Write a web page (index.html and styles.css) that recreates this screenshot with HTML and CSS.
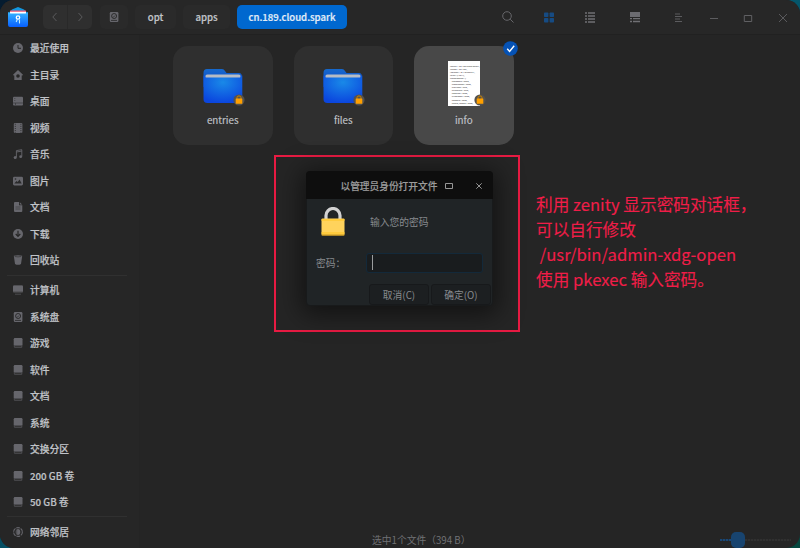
FILE: index.html
```html
<!DOCTYPE html>
<html>
<head>
<meta charset="utf-8">
<title>cn.189.cloud.spark</title>
<link rel="stylesheet" href="styles.css">
</head>
<body>
<svg class="defs" width="0" height="0">
  <defs>
    <linearGradient id="g-app" x1="0" y1="0" x2="0" y2="1"><stop offset="0" stop-color="#38b6ff"/><stop offset="1" stop-color="#075fff"/></linearGradient>
    <radialGradient id="g-folder" cx=".5" cy=".25" r=".75"><stop offset="0" stop-color="#1989e8"/><stop offset="1" stop-color="#0b46de"/></radialGradient>
    <linearGradient id="g-back" x1="0" y1="0" x2="0" y2="1"><stop offset="0" stop-color="#1669cc"/><stop offset="1" stop-color="#0b43cf"/></linearGradient>
  </defs>
  <symbol id="clock" viewBox="0 0 10 10"><circle cx="5" cy="5" r="5" fill="currentColor"/><path d="M5 2v3.3h3" fill="none" stroke="#262626"/></symbol>
  <symbol id="home" viewBox="0 0 10 10"><path fill-rule="evenodd" fill="currentColor" d="M5 0 10 4.7 9.4 5.5H8.7V10H1.3V5.5H.6L0 4.7ZM5 4.2A1.8 1.8 0 1 0 5 7.8 1.8 1.8 0 0 0 5 4.2Z"/></symbol>
  <symbol id="desktop" viewBox="0 0 10 10"><rect y=".8" width="10" height="8.6" rx="1" fill="currentColor"/><path d="M0 7h10M1.3 2.5h1M1.3 4.5h1M2.5 7v2" stroke="#303032" stroke-width=".6"/></symbol>
  <symbol id="film" viewBox="0 0 10 10"><rect x=".8" width="8.6" height="10" rx="1" fill="currentColor"/><path d="M2.3 .8v9M7.9 .8v9" stroke="#262626" stroke-width=".8" stroke-dasharray="1 1.1"/></symbol>
  <symbol id="music" viewBox="0 0 10 10"><path d="M3.4 8.3V1.6L8.8.7v6.8M3.4 3l5.4-.9" fill="none" stroke="currentColor" stroke-width=".9"/><circle cx="2.2" cy="8.5" r="1.5" fill="currentColor"/><circle cx="7.7" cy="7.7" r="1.4" fill="currentColor"/></symbol>
  <symbol id="image" viewBox="0 0 10 10"><rect y=".8" width="10" height="8.6" rx="1.4" fill="currentColor"/><path d="M1.3 7.4 3.5 5l1.2 1L6.5 3.5l2.2 3.9Z" fill="#2a2a2b"/><circle cx="2.5" cy="3" r=".8" fill="#2a2a2b"/></symbol>
  <symbol id="doc" viewBox="0 0 10 10"><path d="M1 1Q1 0 2 0h4v3.2h3.3V9q0 1-1 1H2Q1 10 1 9ZM6.8.2 9.2 2.5H6.8Z" fill="currentColor"/><path d="M2.5 5h5M2.5 7h5" stroke="#404042" stroke-width=".8"/></symbol>
  <symbol id="down" viewBox="0 0 10 10"><circle cx="5" cy="5" r="5" fill="currentColor"/><path d="M5 1.8v5M2.7 5 5 7.4 7.3 5" fill="none" stroke="#262626" stroke-width="1.2"/></symbol>
  <symbol id="trash" viewBox="0 0 10 10"><path d="M.8.8Q5-.5 9.2.8L8 9q-3 1.7-6 0Z" fill="currentColor"/><path d="M1.7 1.5q3.3.8 6.6 0" fill="none" stroke="#303032" stroke-width=".7"/></symbol>
  <symbol id="computer" viewBox="0 0 10 10"><rect y=".6" width="10" height="7.2" rx="1" fill="#48484b"/><path d="M0 1.6q0-1 1-1h8q1 0 1 1V6.5H0Z" fill="currentColor"/><path d="M2 9.2h6" stroke="#505053" stroke-width=".9"/></symbol>
  <symbol id="sysdisk" viewBox="0 0 10 10"><rect x=".8" width="8.6" height="10" rx="1.2" fill="currentColor"/><circle cx="5.1" cy="4" r="2.5" fill="none" stroke="#262626" stroke-width=".9"/><path d="m4 5.5 2-2M2 8.4h6" stroke="#262626" stroke-width=".8"/></symbol>
  <symbol id="disk" viewBox="0 0 10 10"><rect x=".8" width="8.6" height="10" rx="1.2" fill="#454548"/><path d="M.8 1.2Q.8 0 2 0h6.2Q9.4 0 9.4 1.2V7.3H.8Z" fill="currentColor"/><path d="M2 8.5h6" stroke="#2c2c2d" stroke-width=".7"/></symbol>
  <symbol id="network" viewBox="0 0 10 10"><circle cx="5" cy="5" r="4.4" fill="none" stroke="currentColor" stroke-width="1.1" stroke-dasharray="3.8 .8"/><ellipse cx="5" cy="5" rx="2.3" ry="3" fill="currentColor"/><path d="M3.7 2.5v5" stroke="#333" stroke-width=".5"/></symbol>
  <symbol id="folder" viewBox="0 0 40 35"><path d="M.5 4Q.5 0 4 0h15q2 0 3 2l1.5 2H36q3 0 3 4v10H.5Z" fill="url(#g-back)"/><path d="M2.5 6.8q.5-1.3 2-1.3h31q1.5 0 2 1.3V12h-35Z" fill="#b6bbc4"/><path d="M.5 6.5q1.5 0 2 2h34.8q.5-2 2-2V30q0 4-4 4H4.5q-4 0-4-4Z" fill="url(#g-folder)"/></symbol>
  <symbol id="lock" viewBox="0 0 12 12"><circle cx="6" cy="6" r="5.6" fill="#55524e"/><path d="M4 5.5V3.8a2 1.9 0 0 1 4 0V5.5" fill="none" stroke="#c98200" stroke-width="1"/><rect x="2.7" y="4.6" width="6.6" height="5.2" rx=".5" fill="#ffa000"/></symbol>
</svg>
<div class="window">
  <header class="toolbar">
    <svg class="logo" viewBox="0 0 20 20"><path d="M.5 6 4 2.5 10 0l6 2.5L19.5 6Z" fill="#1397df"/><path d="M2 3.5h16V7H2Z" fill="#ed5570"/><path d="M2 4.7h16V8H2Z" fill="#fff"/><path d="M0 5 2.5 6.5h15L20 5V18q0 2-2 2H2q-2 0-2-2Z" fill="url(#g-app)"/><circle cx="10" cy="10.5" r="1.7" fill="none" stroke="#fff" stroke-width="1.3"/><path d="M9.2 12.5 8.2 15M11.5 12.5v4" stroke="#bfeaff" stroke-width="1.1"/></svg>
    <div class="nav"><span><svg viewBox="0 0 10 10"><path d="M6.5 1 2.8 5l3.7 4"/></svg></span><span><svg viewBox="0 0 10 10"><path d="M3.5 1 7.2 5 3.5 9"/></svg></span></div>
    <div class="crumb crumb-disk"><svg class="ico"><use href="#sysdisk"/></svg></div>
    <div class="crumb crumb-opt">opt</div>
    <div class="crumb crumb-apps">apps</div>
    <div class="crumb crumb-active">cn.189.cloud.spark</div>
    <div class="tools">
      <svg viewBox="0 0 12 12"><g fill="none" stroke="#66666a" stroke-width="1"><circle cx="5" cy="5" r="4.3"/><path d="m8.2 8.2 3.3 3.3"/></g></svg>
      <svg viewBox="0 0 12 12"><g fill="#164b83"><rect x="1" y="1.5" width="4.4" height="4.4" rx=".7"/><rect x="6.6" y="1.5" width="4.4" height="4.4" rx=".7"/><rect x="1" y="7.1" width="4.4" height="4.4" rx=".7"/><rect x="6.6" y="7.1" width="4.4" height="4.4" rx=".7"/></g></svg>
      <svg viewBox="0 0 12 12"><path d="M1 2h2M4 2h7M1 5h2M4 5h7M1 8h2M4 8h7M1 11h2M4 11h7" stroke="#707074" stroke-width="1.3"/></svg>
      <svg viewBox="0 0 12 12"><path d="M1 1h10v5H1Z" fill="#6c6c71"/><path d="M1 7.7h2M4 7.7h7M1 10.5h2M4 10.5h7" stroke="#707074" stroke-width="1.3"/></svg>
    </div>
    <div class="winctl">
      <svg viewBox="0 0 12 12"><path d="M2 3h5M2 5.5h7M2 8h5M2 10.5h7" stroke="#5c5c5f"/></svg>
      <svg viewBox="0 0 12 12"><path d="M2 7.5h8" stroke="#5c5c5f"/></svg>
      <svg viewBox="0 0 12 12"><path d="M2.3 4.5h7.4v6H2.3Z" fill="none" stroke="#606063"/></svg>
      <svg viewBox="0 0 12 12"><path d="m2 3 8 8M10 3l-8 8" stroke="#606063" stroke-width=".9"/></svg>
    </div>
  </header>
  <div class="body">
    <nav class="sidebar">
      <div class="item"><svg class="ico"><use href="#clock"/></svg>最近使用</div>
      <div class="item"><svg class="ico"><use href="#home"/></svg>主目录</div>
      <div class="item"><svg class="ico"><use href="#desktop"/></svg>桌面</div>
      <div class="item"><svg class="ico"><use href="#film"/></svg>视频</div>
      <div class="item"><svg class="ico"><use href="#music"/></svg>音乐</div>
      <div class="item"><svg class="ico"><use href="#image"/></svg>图片</div>
      <div class="item"><svg class="ico"><use href="#doc"/></svg>文档</div>
      <div class="item"><svg class="ico"><use href="#down"/></svg>下载</div>
      <div class="item"><svg class="ico"><use href="#trash"/></svg>回收站</div>
      <div class="sep"></div>
      <div class="item"><svg class="ico"><use href="#computer"/></svg>计算机</div>
      <div class="item"><svg class="ico"><use href="#sysdisk"/></svg>系统盘</div>
      <div class="item"><svg class="ico"><use href="#disk"/></svg>游戏</div>
      <div class="item"><svg class="ico"><use href="#disk"/></svg>软件</div>
      <div class="item"><svg class="ico"><use href="#disk"/></svg>文档</div>
      <div class="item"><svg class="ico"><use href="#disk"/></svg>系统</div>
      <div class="item"><svg class="ico"><use href="#disk"/></svg>交换分区</div>
      <div class="item"><svg class="ico"><use href="#disk"/></svg>200 GB 卷</div>
      <div class="item"><svg class="ico"><use href="#disk"/></svg>50 GB 卷</div>
      <div class="sep"></div>
      <div class="item"><svg class="ico"><use href="#network"/></svg>网络邻居</div>
    </nav>
    <main class="main">
      <div class="files">
        <div class="card"><div class="pic"><svg class="folder"><use href="#folder"/></svg><svg class="lock"><use href="#lock"/></svg></div><div class="name">entries</div></div>
        <div class="card"><div class="pic"><svg class="folder"><use href="#folder"/></svg><svg class="lock"><use href="#lock"/></svg></div><div class="name">files</div></div>
        <div class="card selected">
          <div class="pic">
            <div class="paper"><pre>"appid": "cn.189.cloud.spark",
"name": "cn.189",
"version": "3.1.0.spark4",
"arch": ["x64"],
"permissions": {
   "autostart": false,
   "notification": false,
   "trayicon": true,
   "clipboard": true,
   "account": false,
   "bluetooth": false,
   "camera": false,
   "audio_record": false,</pre></div>
            <svg class="lock"><use href="#lock"/></svg>
          </div>
          <div class="name">info</div>
          <svg class="check" viewBox="0 0 15 15"><circle cx="7.5" cy="7.5" r="7.3" fill="#0552b5"/><path d="m4.2 7.8 2.4 2.6 4.6-5.7" fill="none" stroke="#fff" stroke-width="1.4"/></svg>
        </div>
      </div>
      <footer class="status"><span class="count">选中1个文件（394 B）</span><div class="slider"><i class="done"></i><i class="knob"></i><i class="rest"></i></div></footer>
    </main>
  </div>
</div>
<div class="frame"></div>
<section class="dialog">
  <div class="dlg-head"><span class="dlg-title">以管理员身份打开文件</span><svg class="dlg-max" viewBox="0 0 8 6"><path d="M.5.5h7v5h-7Z"/></svg><svg class="dlg-close" viewBox="0 0 6 6"><path d="m.3.3 5.4 5.4M5.7.3.3 5.7"/></svg></div>
  <div class="dlg-msg"><svg class="padlock" viewBox="0 0 24 29"><path d="M5 13V8.5a7 7 0 0 1 14 0V13" fill="none" stroke="#d2d2d2" stroke-width="3.2"/><rect x=".5" y="11.5" width="23" height="17" rx="1" fill="#ffd35c"/><path d="M.5 13h23M.5 26h23" stroke="#ffc933" stroke-width="1.5"/><path d="M.7 28h22.6" stroke="#c58e0b"/></svg><span>输入您的密码</span></div>
  <div class="dlg-field"><label>密码：</label><div class="input"><i></i></div></div>
  <div class="dlg-actions"><div class="btn">取消(C)</div><div class="btn">确定(O)</div></div>
</section>
<div class="note">利用 zenity 显示密码对话框，
可以自行修改
 /usr/bin/admin-xdg-open
使用 pkexec 输入密码。</div>
</body>
</html>
```
FILE: styles.css
```css
* { box-sizing: border-box; }
body {
  margin: 0;
  width: 800px;
  height: 548px;
  overflow: hidden;
  position: relative;
  background: linear-gradient(135deg, #051c30 0, #051c30 8%, #04566b 45%, #04566b 70%, #06483f 100%);
  font-family: "Noto Sans CJK SC", sans-serif;
  font-size: 9.75px;
  color: #c0c3c8;
}
svg { display: block; flex: none; }
.defs { position: absolute; }
.window {
  width: 800px;
  height: 548px;
  display: flex;
  flex-direction: column;
  background: #252525;
  border-radius: 14px;
  overflow: hidden;
}
.toolbar {
  height: 35px;
  flex: none;
  display: flex;
  align-items: center;
  padding: 0 11px 0 8px;
  background: #272727;
  border-bottom: 1px solid #212121;
}
.logo { width: 20px; height: 20px; margin-right: 15px; }
.nav { display: flex; width: 49px; height: 24px; border-radius: 5px; background: #2f2f2f; margin-right: 8px; }
.nav span { flex: 1; display: flex; align-items: center; justify-content: center; }
.nav span + span { border-left: 1px solid #292929; }
.nav svg { width: 10px; height: 10px; fill: none; stroke: #5b5b5d; }
.crumb {
  height: 24px;
  display: flex;
  align-items: center;
  justify-content: center;
  border-radius: 5px;
  background: #2a2a2a;
  margin-right: 7px;
  font-size: 9.6px;
  font-weight: 500;
  -webkit-text-stroke: .2px currentColor;
}
.crumb-disk { width: 28px; }
.crumb-opt { width: 41px; }
.crumb-apps { width: 47px; }
.crumb-active { width: 110px; background: #0068cf; color: #e2edf8; }
.ico { width: 10px; height: 10px; color: #66666c; }
.tools { margin-left: auto; display: flex; gap: 30.3px; margin-right: 32.2px; }
.tools svg, .winctl svg { width: 12px; height: 12px; }
.tools svg:nth-child(2) { margin: 0 1.5px 0 -1.5px; }
.tools svg:nth-child(3) { margin: 0 2px 0 -2px; }
.winctl { display: flex; gap: 22.7px; }
.body { flex: 1; display: flex; min-height: 0; }
.sidebar { width: 140px; background: #262626; border-right: 1px solid #242424; }
.item {
  height: 26.5px;
  display: flex;
  align-items: center;
  gap: 7px;
  padding-left: 13px;
  font-weight: 500;
  -webkit-text-stroke: .2px currentColor;
  white-space: nowrap;
}
.sep { height: 1px; margin: 1px 12px 1.25px 7px; background: #303030; }
.main { flex: 1; display: flex; flex-direction: column; justify-content: space-between; padding-left: 33px; }
.files { display: flex; gap: 21px; padding-top: 11px; }
.card {
  position: relative;
  width: 99.5px;
  height: 99px;
  border-radius: 15px;
  background: #2f2f2f;
  display: flex;
  flex-direction: column;
  align-items: center;
  padding-top: 15px;
}
.selected { background: #484848; }
.pic { position: relative; width: 40px; height: 45px; display: flex; justify-content: center; align-items: center; }
.folder { width: 40px; height: 35px; margin-top: 5px; }
.paper { width: 32px; height: 45px; padding: 3.5px 0 0 2px; background: #fff; overflow: hidden; }
.paper pre {
  margin: 0;
  font: 2.2px/3.1px "Noto Sans", sans-serif;
  color: #222;
}
.lock { position: absolute; width: 12px; height: 12px; left: 30px; top: 33px; }
.check { position: absolute; width: 15px; height: 15px; right: -4px; top: -5px; }
.name { font-size: 9.8px; line-height: 16px; margin-top: 6px; -webkit-text-stroke: .15px currentColor; }
.status { height: 17px; display: flex; align-items: center; color: #707174; padding: 0 9px 0 199px; }
.slider { margin-left: auto; display: flex; align-items: center; }
.slider i { display: block; }
.done, .rest { height: 2px; }
.done { width: 11px; background: repeating-linear-gradient(90deg, #184777 0 2px, #203244 2px 3px); }
.knob { width: 14px; height: 16px; border-radius: 5px; background: #18446f; }
.rest { width: 46px; background: repeating-linear-gradient(90deg, #303030 0 2px, #282828 2px 3px); }
.frame {
  position: absolute;
  left: 274px;
  top: 155px;
  width: 246px;
  height: 177px;
  border: 2px solid #e81b43;
}
.dialog {
  position: absolute;
  left: 306px;
  top: 171px;
  width: 187px;
  height: 135px;
  border-radius: 4px;
  border: 1px solid #181a1b;
  background: #202426;
  color: #878a8e;
  box-shadow: 0 4px 24px 5px rgba(0, 0, 0, .5);
}
.dlg-head {
  height: 28px;
  display: flex;
  align-items: center;
  margin: -1px -1px 0;
  padding: 1px 11px 0 34.5px;
  background: #0e0e0e;
  border-radius: 4px 4px 0 0;
}
.dlg-title { font-weight: 500; font-size: 9.7px; color: #9b9b9b; -webkit-text-stroke: .15px currentColor; }
.dlg-head svg { fill: none; stroke: #969696; }
.dlg-max { width: 8px; height: 6px; margin-left: 7.5px; }
.dlg-close { width: 6px; height: 6px; margin-left: auto; }
.dlg-msg { display: flex; align-items: center; gap: 25px; height: 29px; margin: 8px 0 0 14px; }
.padlock { width: 24px; height: 29px; }
.dlg-field { display: flex; align-items: center; justify-content: space-between; height: 20px; margin: 17px 9px 0; }
.input { width: 117px; height: 20px; padding: 1px 0 0 5px; background: #191c1e; border: 1px solid #13293a; border-radius: 3px; }
.input i { display: block; width: 1px; height: 15px; background: #9a9c9e; }
.dlg-actions { display: flex; justify-content: flex-end; gap: 2px; margin: 11px 1px 0 0; }
.btn { width: 60px; height: 21px; display: flex; align-items: center; justify-content: center; background: #1c1f21; border: 1px solid #17191b; border-radius: 3px; }
.note {
  position: absolute;
  left: 536px;
  top: 192px;
  white-space: pre;
  font-size: 16.65px;
  line-height: 25px;
  color: #f01d48;
  -webkit-text-stroke: .12px currentColor;
}
```
